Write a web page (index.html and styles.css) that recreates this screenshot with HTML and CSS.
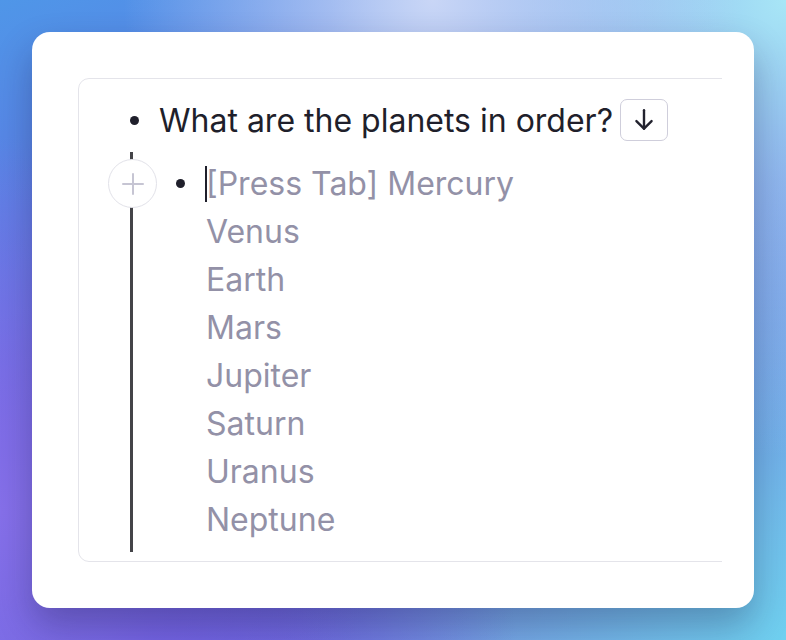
FILE: index.html
```html
<!DOCTYPE html>
<html lang="en">
<head>
  <meta charset="UTF-8">
  <meta name="viewport" content="width=device-width, initial-scale=1.0">
  <title>Outline</title>
  <link rel="stylesheet" href="styles.css">
</head>

<body>
  <div class="card">
    <div class="clip">
      <div class="editor">
        <div class="row">
          <span class="dot"></span>
          <span class="question">What are the planets in order?</span>
          <button class="down" type="button">
            <svg width="26" height="26" viewBox="0 0 24 24" fill="none" stroke="#22222e" stroke-width="2.2" stroke-linecap="round" stroke-linejoin="round">
              <path d="M12 3v17" />
              <path d="M5 13l7 7 7-7" />
            </svg>
          </button>
        </div>
        <div class="children">
          <div class="row child">
            <span class="plus">
              <svg width="24" height="24" viewBox="0 0 24 24" fill="none" stroke="#c6c5d3" stroke-width="2" stroke-linecap="round">
                <path d="M12 2v20" />
                <path d="M2 12h20" />
              </svg>
            </span>
            <span class="dot"></span>
            <div class="answers">
              <div class="line"><span class="caret"></span>[Press Tab] Mercury</div>
              <div class="line">Venus</div>
              <div class="line">Earth</div>
              <div class="line">Mars</div>
              <div class="line">Jupiter</div>
              <div class="line">Saturn</div>
              <div class="line">Uranus</div>
              <div class="line">Neptune</div>
            </div>
          </div>
        </div>
      </div>
    </div>
  </div>
</body>
</html>
```

FILE: styles.css
```css
html, body {
  margin: 0;
  height: 100%;
}
body {
  box-sizing: border-box;
  padding: 32px;
  font-family: Inter, "Liberation Sans", sans-serif;
  background:
    radial-gradient(circle at 0% 80%, #8670ea 0%, rgba(134, 112, 234, 0) 40%),
    radial-gradient(circle at 20% 100%, #6458dc 0%, rgba(100, 88, 220, 0) 40%),
    radial-gradient(circle at 55% 0%, #c9d6f6 0%, rgba(201, 214, 246, 0) 40%),
    radial-gradient(circle at 100% 0%, #a8e6f6 0%, rgba(168, 230, 246, 0) 45%),
    radial-gradient(circle at 100% 100%, #6fd0f0 0%, rgba(111, 208, 240, 0) 50%),
    linear-gradient(160deg, #4f96e8 0%, #6a66e2 50%, #7f90dc 100%);
  overflow: hidden;
}
.card {
  width: 722px;
  height: 576px;
  box-sizing: border-box;
  background: #fff;
  border-radius: 18px;
  padding: 46px 32px 0 46px;
  box-shadow: 0 18px 36px rgba(20, 20, 60, 0.3);
}
.clip {
  width: 644px;
  overflow: hidden;
}
.editor {
  width: 720px;
  height: 484px;
  box-sizing: border-box;
  border: 1.5px solid #e4e4ea;
  border-radius: 11px;
  padding: 18px 0 0 0;
}
.row {
  display: flex;
  align-items: flex-start;
  padding-left: 51px;
  line-height: 48px;
  font-size: 32px;
  color: #1f1f2b;
}
.dot {
  flex: none;
  width: 9px;
  height: 9px;
  border-radius: 50%;
  background: #1f1f2b;
  margin-top: 19px;
  margin-right: 20px;
}
.question {
  white-space: nowrap;
}
.down {
  flex: none;
  width: 48px;
  height: 42px;
  margin: 2px 0 0 7px;
  padding: 0;
  display: flex;
  align-items: center;
  justify-content: center;
  background: #fff;
  border: 1.5px solid #cfcedb;
  border-radius: 7px;
}
.children {
  margin: 7px 0 0 51px;
  border-left: 3px solid #444448;
  padding: 8px 0 8px 0;
}
.child {
  position: relative;
  padding-left: 43px;
  color: #9391a7;
}
.child .dot {
  margin-right: 21px;
}
.plus {
  position: absolute;
  left: -25px;
  top: -1px;
  width: 47px;
  height: 47px;
  border-radius: 50%;
  background: #fff;
  border: 1.5px solid #e2e2e9;
  display: flex;
  align-items: center;
  justify-content: center;
}
.line {
  position: relative;
  white-space: nowrap;
}
.caret {
  position: absolute;
  left: -1px;
  top: 6px;
  width: 2px;
  height: 36px;
  background: #1f1f2b;
}
```
